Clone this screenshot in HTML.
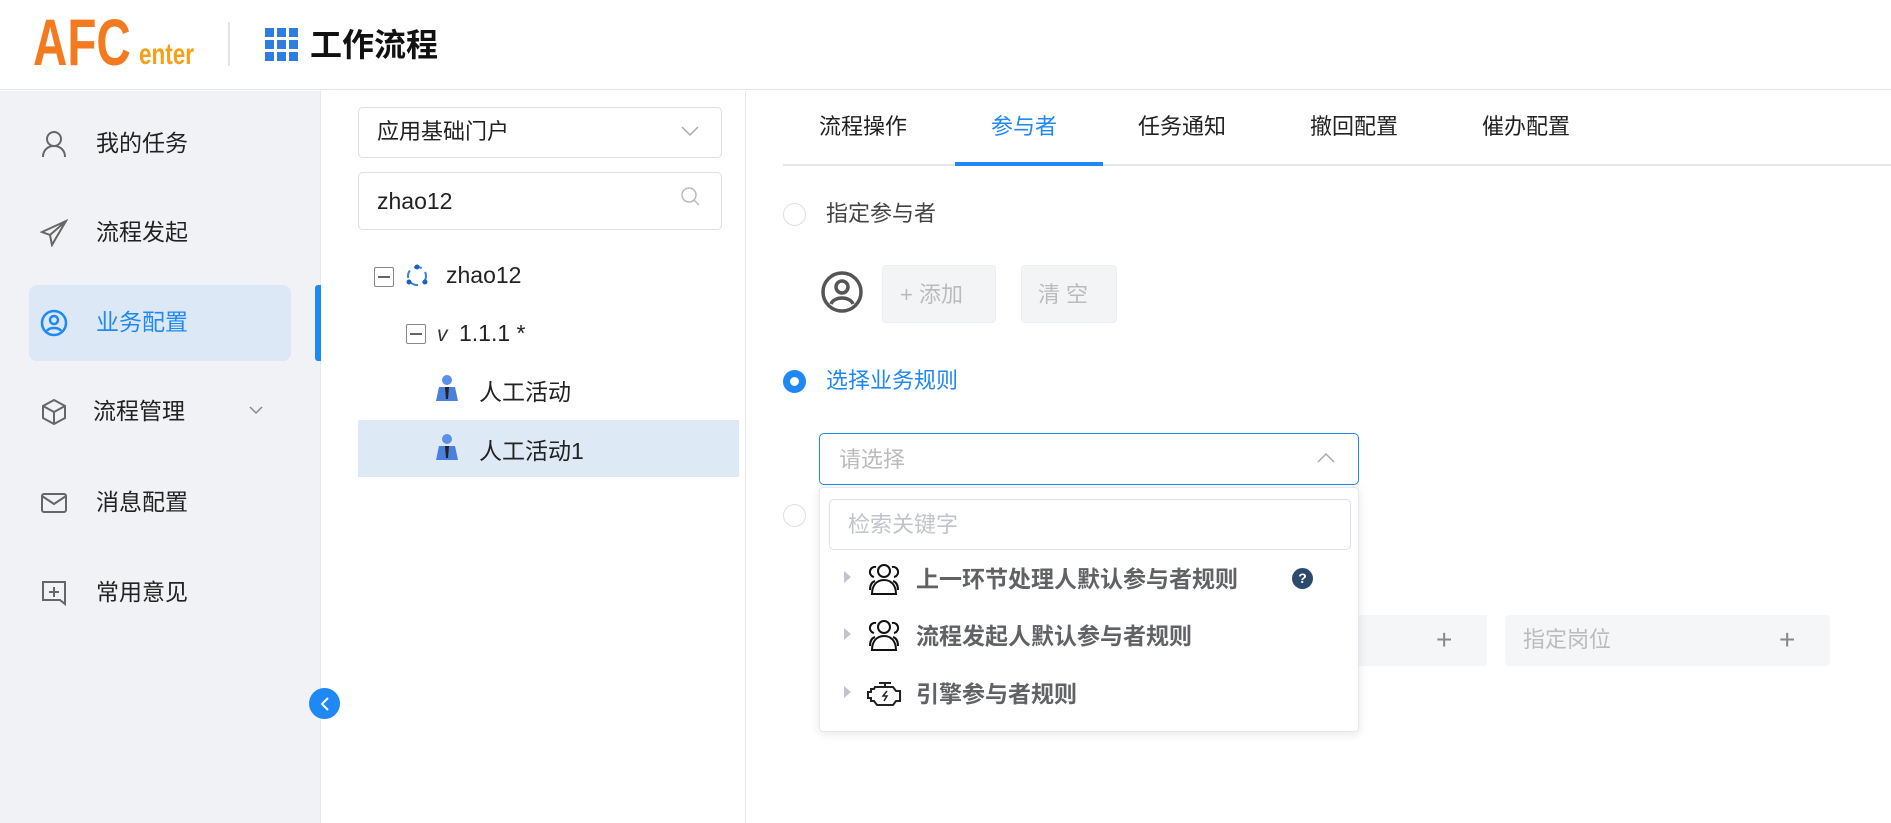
<!DOCTYPE html>
<html><head><meta charset="utf-8"><style>
*{margin:0;padding:0;box-sizing:border-box}
body{width:1891px;height:823px;overflow:hidden;background:#fff;font-family:"Liberation Sans","Noto Sans CJK SC",sans-serif;position:relative;color:#303133}
.a{position:absolute}
.t{position:absolute;white-space:nowrap;line-height:1}
</style></head><body>
<!-- header -->
<div class="a" style="left:0;top:0;width:1891px;height:90px;border-bottom:1px solid #e4e7ed"></div>
<div class="t" style="left:33px;top:9px;font-size:66px;font-weight:bold;color:#f37a1f;transform:scaleX(0.72);transform-origin:left">AFC</div>
<div class="t" style="left:139px;top:40px;font-size:30px;font-weight:bold;color:#f5a01a;transform:scaleX(0.75);transform-origin:left">enter</div>
<div class="a" style="left:228px;top:22px;width:2px;height:44px;background:#e4e4e4"></div>
<svg class="a" style="left:265px;top:28px" width="33" height="33"><g fill="#2f7de1">
<rect x="0" y="0" width="9" height="9"/><rect x="12" y="0" width="9" height="9"/><rect x="24" y="0" width="9" height="9"/>
<rect x="0" y="12" width="9" height="9"/><rect x="12" y="12" width="9" height="9"/><rect x="24" y="12" width="9" height="9"/>
<rect x="0" y="24" width="9" height="9"/><rect x="12" y="24" width="9" height="9"/><rect x="24" y="24" width="9" height="9"/></g></svg>
<div class="t" style="left:310px;top:29px;font-size:32px;font-weight:bold;color:#111">工作流程</div>

<!-- sidebar -->
<div class="a" style="left:0;top:91px;width:321px;height:732px;background:#f0f2f5;border-right:1px solid #e4e7ed"></div>
<div class="a" style="left:29px;top:285px;width:262px;height:76px;background:#dce8f5;border-radius:8px"></div>
<div class="a" style="left:315px;top:285px;width:6px;height:76px;background:#1e88f5;border-radius:3px 0 0 3px"></div>
<svg class="a" style="left:40px;top:130px" width="28" height="28" fill="none" stroke="#666" stroke-width="2"><circle cx="14" cy="9" r="7"/><path d="M3 27c0-7 5-11 11-11s11 4 11 11"/></svg>
<div class="t" style="left:96px;top:132px;font-size:23px;color:#222">我的任务</div>
<svg class="a" style="left:40px;top:219px" width="28" height="28" fill="none" stroke="#666" stroke-width="2"><path d="M26 2L2 13l8 3 2 10 4-7 10-17zM10 16l16-14"/></svg>
<div class="t" style="left:96px;top:221px;font-size:23px;color:#222">流程发起</div>
<svg class="a" style="left:40px;top:309px" width="28" height="28" fill="none" stroke="#1e88f5" stroke-width="2.5"><circle cx="14" cy="14" r="12"/><circle cx="14" cy="11" r="4"/><path d="M7 22c2-4 12-4 14 0"/></svg>
<div class="t" style="left:96px;top:311px;font-size:23px;color:#1e88f5">业务配置</div>
<svg class="a" style="left:40px;top:398px" width="28" height="28" fill="none" stroke="#666" stroke-width="2"><path d="M14 2l11 6v12l-11 6-11-6V8z M3 8l11 6 11-6 M14 14v12"/></svg>
<div class="t" style="left:93px;top:400px;font-size:23px;color:#222">流程管理</div>
<svg class="a" style="left:248px;top:404px" width="16" height="12" fill="none" stroke="#888" stroke-width="1.5"><path d="M2 3l6 6 6-6"/></svg>
<svg class="a" style="left:40px;top:489px" width="28" height="28" fill="none" stroke="#666" stroke-width="2"><rect x="2" y="5" width="24" height="18" rx="2"/><path d="M2 7l12 8 12-8"/></svg>
<div class="t" style="left:96px;top:491px;font-size:23px;color:#222">消息配置</div>
<svg class="a" style="left:40px;top:579px" width="28" height="28" fill="none" stroke="#666" stroke-width="2"><path d="M3 3h22v22l-5-4H3z M14 8v10 M9 13h10"/></svg>
<div class="t" style="left:96px;top:581px;font-size:23px;color:#222">常用意见</div>
<div class="a" style="left:309px;top:688px;width:31px;height:31px;border-radius:50%;background:#1e88f5"></div>
<svg class="a" style="left:318px;top:696px" width="14" height="16" fill="none" stroke="#fff" stroke-width="2"><path d="M10 2L4 8l6 6"/></svg>

<!-- middle panel -->
<div class="a" style="left:745px;top:91px;width:1px;height:732px;background:#e4e7ed"></div>
<div class="a" style="left:358px;top:107px;width:364px;height:51px;border:1px solid #dcdfe6;border-radius:5px"></div>
<div class="t" style="left:377px;top:121px;font-size:22px;color:#222">应用基础门户</div>
<svg class="a" style="left:680px;top:124px" width="20" height="14" fill="none" stroke="#aaa" stroke-width="1.5"><path d="M2 3l8 8 8-8"/></svg>
<div class="a" style="left:358px;top:172px;width:364px;height:58px;border:1px solid #dcdfe6;border-radius:5px"></div>
<div class="t" style="left:377px;top:190px;font-size:23px;color:#222">zhao12</div>
<svg class="a" style="left:680px;top:186px" width="22" height="22" fill="none" stroke="#bbb" stroke-width="1.5"><circle cx="9" cy="9" r="7"/><path d="M14 14l5 5"/></svg>
<div class="a" style="left:374px;top:267px;width:20px;height:20px;border:1px solid #888;border-radius:2px"></div>
<div class="a" style="left:378px;top:276px;width:12px;height:1.5px;background:#666"></div>
<svg class="a" style="left:405px;top:263px" width="24" height="26" fill="none" stroke="#3b7de0" stroke-width="2"><circle cx="12" cy="13" r="9" stroke-dasharray="8 5"/><circle cx="12" cy="4" r="2.5" fill="#1565c0" stroke="none"/><circle cx="4" cy="19" r="2.5" fill="#1565c0" stroke="none"/><circle cx="20" cy="19" r="2.5" fill="#1565c0" stroke="none"/></svg>
<div class="t" style="left:446px;top:264px;font-size:23px;color:#222">zhao12</div>
<div class="a" style="left:406px;top:324px;width:20px;height:20px;border:1px solid #888;border-radius:2px"></div>
<div class="a" style="left:410px;top:333px;width:12px;height:1.5px;background:#666"></div>
<div class="t" style="left:437px;top:324px;font-size:21px;color:#333;font-style:italic">v</div>
<div class="t" style="left:459px;top:322px;font-size:23px;color:#222">1.1.1 *</div>
<div class="a" style="left:358px;top:420px;width:381px;height:57px;background:#dde9f5"></div>
<svg class="a" style="left:435px;top:375px" width="24" height="26"><circle cx="12" cy="5" r="5" fill="#5b8fe8"/><path d="M1 26l3-14h16l3 14z" fill="#4a7fdc"/><path d="M10 12h4l-1 12h-2z" fill="#222"/></svg>
<div class="t" style="left:479px;top:381px;font-size:23px;color:#222">人工活动</div>
<svg class="a" style="left:435px;top:434px" width="24" height="26"><circle cx="12" cy="5" r="5" fill="#5b8fe8"/><path d="M1 26l3-14h16l3 14z" fill="#4a7fdc"/><path d="M10 12h4l-1 12h-2z" fill="#222"/></svg>
<div class="t" style="left:479px;top:440px;font-size:23px;color:#222">人工活动1</div>

<!-- right tabs -->
<div class="a" style="left:783px;top:164px;width:1108px;height:2px;background:#e4e7ed"></div>
<div class="a" style="left:955px;top:162px;width:148px;height:4px;background:#1e88f5"></div>
<div class="t" style="left:819px;top:116px;font-size:22px;color:#222">流程操作</div>
<div class="t" style="left:991px;top:116px;font-size:22px;color:#1e88f5">参与者</div>
<div class="t" style="left:1138px;top:116px;font-size:22px;color:#222">任务通知</div>
<div class="t" style="left:1310px;top:116px;font-size:22px;color:#222">撤回配置</div>
<div class="t" style="left:1482px;top:116px;font-size:22px;color:#222">催办配置</div>

<div class="a" style="left:783px;top:203px;width:23px;height:23px;border:1px solid #dcdfe6;border-radius:50%"></div>
<div class="t" style="left:826px;top:203px;font-size:22px;color:#444">指定参与者</div>
<svg class="a" style="left:820px;top:270px" width="44" height="44" fill="none" stroke="#555" stroke-width="3.5"><circle cx="22" cy="22" r="19"/><circle cx="22" cy="17" r="6"/><path d="M11 34c3-8 19-8 22 0"/></svg>
<div class="a" style="left:882px;top:265px;width:114px;height:58px;background:#f3f4f6;border:1px solid #ebeef5;border-radius:4px"></div>
<div class="t" style="left:900px;top:284px;font-size:22px;color:#bbb">+ 添加</div>
<div class="a" style="left:1021px;top:265px;width:96px;height:58px;background:#f3f4f6;border:1px solid #ebeef5;border-radius:4px"></div>
<div class="t" style="left:1038px;top:284px;font-size:22px;color:#bbb;letter-spacing:6px">清空</div>

<div class="a" style="left:783px;top:370px;width:23px;height:23px;border:7px solid #1e88f5;border-radius:50%"></div>
<div class="t" style="left:826px;top:370px;font-size:22px;color:#1e88f5">选择业务规则</div>

<div class="a" style="left:783px;top:504px;width:23px;height:23px;border:1px solid #dcdfe6;border-radius:50%"></div>
<div class="a" style="left:1359px;top:615px;width:128px;height:51px;background:#f5f6f8"></div>
<div class="t" style="left:1436px;top:626px;font-size:28px;color:#888;font-weight:200">+</div>
<div class="a" style="left:1505px;top:615px;width:325px;height:51px;background:#f5f6f8;border-radius:4px"></div>
<div class="t" style="left:1523px;top:629px;font-size:22px;color:#bbb">指定岗位</div>
<div class="t" style="left:1779px;top:626px;font-size:28px;color:#888;font-weight:200">+</div>

<div class="a" style="left:819px;top:433px;width:540px;height:52px;border:1px solid #1e88f5;border-radius:5px;background:#fff"></div>
<div class="t" style="left:839px;top:449px;font-size:22px;color:#bbb">请选择</div>
<svg class="a" style="left:1316px;top:451px" width="20" height="14" fill="none" stroke="#aaa" stroke-width="1.5"><path d="M2 11l8-8 8 8"/></svg>
<div class="a" style="left:819px;top:487px;width:540px;height:245px;background:#fff;border:1px solid #e4e7ed;border-radius:4px;box-shadow:0 2px 10px rgba(0,0,0,0.1)"></div>
<div class="a" style="left:829px;top:499px;width:522px;height:51px;border:1px solid #dcdfe6;border-radius:5px"></div>
<div class="t" style="left:848px;top:514px;font-size:22px;color:#c0c4cc">检索关键字</div>

<svg class="a" style="left:843px;top:570px" width="10" height="14"><path d="M1 1l7 6-7 6z" fill="#c0c4cc"/></svg>
<svg class="a" style="left:867px;top:562px" width="36" height="34" fill="none" stroke="#111" stroke-width="2"><circle cx="17" cy="9" r="6"/><path d="M5 32c0-9 5-14 12-14s12 5 12 14z"/><path d="M9 5a5 5 0 0 0-2 10M25 5a5 5 0 0 1 2 10M3 28c0-5 2-8 5-9M31 28c0-5-2-8-5-9"/></svg>
<div class="t" style="left:916px;top:568px;font-size:23px;font-weight:bold;color:#606266">上一环节处理人默认参与者规则</div>
<div class="a" style="left:1292px;top:568px;width:21px;height:21px;border-radius:50%;background:#2b4a6e;color:#fff;font-size:14px;font-weight:bold;text-align:center;line-height:21px">?</div>

<svg class="a" style="left:843px;top:627px" width="10" height="14"><path d="M1 1l7 6-7 6z" fill="#c0c4cc"/></svg>
<svg class="a" style="left:867px;top:618px" width="36" height="34" fill="none" stroke="#111" stroke-width="2"><circle cx="17" cy="9" r="6"/><path d="M5 32c0-9 5-14 12-14s12 5 12 14z"/><path d="M9 5a5 5 0 0 0-2 10M25 5a5 5 0 0 1 2 10M3 28c0-5 2-8 5-9M31 28c0-5-2-8-5-9"/></svg>
<div class="t" style="left:916px;top:625px;font-size:23px;font-weight:bold;color:#606266">流程发起人默认参与者规则</div>

<svg class="a" style="left:843px;top:685px" width="10" height="14"><path d="M1 1l7 6-7 6z" fill="#c0c4cc"/></svg>
<svg class="a" style="left:867px;top:680px" width="38" height="30" fill="none" stroke="#222" stroke-width="2"><path d="M12 3h12M18 3v4M8 7h18l3 4h4v10h-4l-3 4H10l-3-4H4v-3H1v-6h3v-3h3z"/><path d="M20 11l-4 5h4l-3 5" stroke-width="1.5"/></svg>
<div class="t" style="left:916px;top:683px;font-size:23px;font-weight:bold;color:#606266">引擎参与者规则</div>
</body></html>
